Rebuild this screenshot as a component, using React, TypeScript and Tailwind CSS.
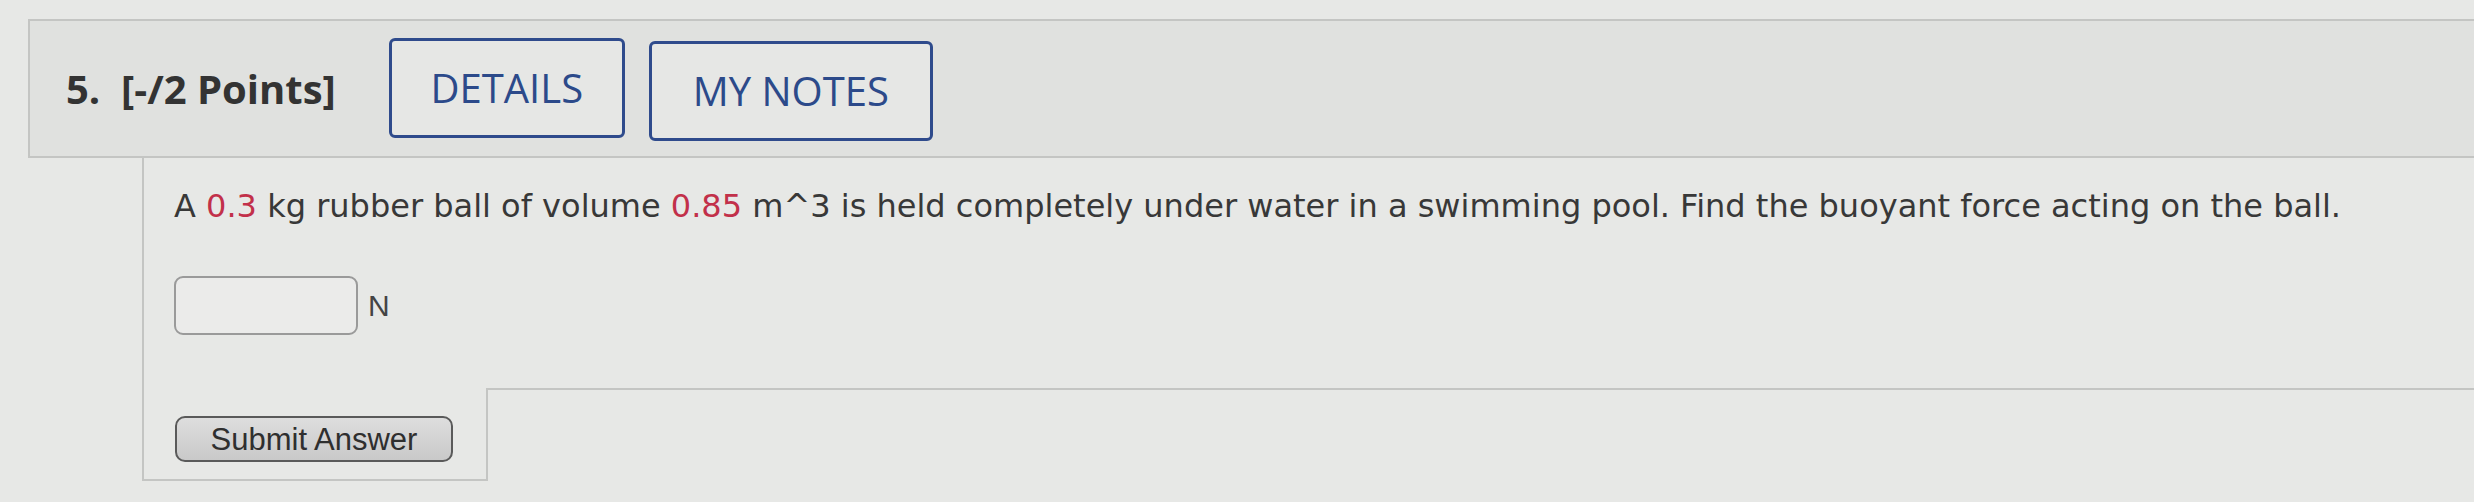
export default function App() {
  return (
    <div className="w-full h-[502px] overflow-hidden bg-[#e7e8e6] pt-[19px] text-[#353535]">
      {/* question header */}
      <div className="ml-[28px] h-[139px] border-t-2 border-l-2 border-b-2 border-[#c4c5c3] bg-[#e0e1df] flex items-center pl-[36px]">
        <div className="font-['Open_Sans',sans-serif] font-bold text-[40px] leading-none text-[#333] whitespace-pre">
          5.  [-/2 Points]
        </div>
        <button className="ml-[53px] mt-[-2px] w-[236px] h-[100px] rounded-[6px] border-[3px] border-[#2f4b8c] bg-[#e6e7e5] font-['Open_Sans',sans-serif] text-[40px] text-[#2c4a8a] leading-none">
          DETAILS
        </button>
        <button className="ml-[24px] mt-[4px] w-[284px] h-[100px] rounded-[6px] border-[3px] border-[#2f4b8c] bg-[#e6e7e5] font-['Open_Sans',sans-serif] text-[40px] text-[#2c4a8a] leading-none">
          MY NOTES
        </button>
      </div>

      {/* question body */}
      <div className="ml-[142px] border-l-2 border-[#c4c5c3]">
        <div className="pl-[30px] pt-[26px]">
          <p className="font-['DejaVu_Sans',sans-serif] text-[32px] leading-[44px] text-[#383838] whitespace-nowrap">
            A <span className="text-[#c2304a]">0.3</span> kg rubber ball of volume{' '}
            <span className="text-[#c2304a]">0.85</span> m^3 is held completely under water in a swimming pool. Find the buoyant force acting on the ball.
          </p>
          <div className="mt-[48px] flex items-center">
            <div className="w-[184px] h-[59px] rounded-[9px] border-2 border-[#9a9a9a] bg-[#ebebea]" />
            <span className="ml-[10px] font-['Liberation_Sans',Arial,sans-serif] text-[30px] text-[#444]">N</span>
          </div>
        </div>
        <div className="mt-[53px] flex h-[93px]">
          <div className="w-[344px] border-r-2 border-b-2 border-[#c4c5c3] pl-[31px] pt-[28px]">
            <button className="w-[278px] h-[46px] rounded-[10px] border-2 border-[#5a5a5a] bg-gradient-to-b from-[#dedede] to-[#c9c9c9] font-['Liberation_Sans',Arial,sans-serif] text-[31px] leading-none text-[#2f2f2f]">
              Submit Answer
            </button>
          </div>
          <div className="flex-1 border-t-2 border-[#c4c5c3]" />
        </div>
      </div>
    </div>
  );
}
